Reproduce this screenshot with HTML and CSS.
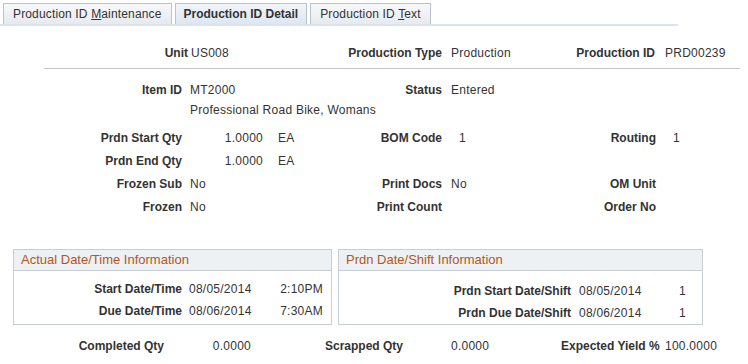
FILE: index.html
```html
<!DOCTYPE html>
<html lang="en">
<head>
  <meta charset="UTF-8" />
  <title>Production ID Detail</title>
  <link rel="stylesheet" href="styles.css">
</head>
<body>
  <div class="tabs">
    <div class="tab">Production ID <u>M</u>aintenance</div>
    <div class="tab active">Production ID Detail</div>
    <div class="tab">Production ID <u>T</u>ext</div>
  </div>

  <div class="header">
    <div class="label">Unit</div>
    <div class="value v-unit">US008</div>
    <div class="label">Production Type</div>
    <div class="value">Production</div>
    <div class="label">Production ID</div>
    <div class="value v-last">PRD00239</div>
  </div>

  <div class="fields">
    <div class="label">Item ID</div>
    <div class="value">
      MT2000
      <div class="desc">Professional Road Bike, Womans</div>
    </div>
    <div class="label">Status</div>
    <div class="value">Entered</div>
    <div></div>
    <div></div>

    <div class="label">Prdn Start Qty</div>
    <div class="value"><span class="qty">1.0000</span><span class="uom">EA</span></div>
    <div class="label">BOM Code</div>
    <div class="value indent">1</div>
    <div class="label">Routing</div>
    <div class="value indent">1</div>

    <div class="label">Prdn End Qty</div>
    <div class="value"><span class="qty">1.0000</span><span class="uom">EA</span></div>
    <div></div>
    <div></div>
    <div></div>
    <div></div>

    <div class="label">Frozen Sub</div>
    <div class="value">No</div>
    <div class="label">Print Docs</div>
    <div class="value">No</div>
    <div class="label">OM Unit</div>
    <div class="value"></div>

    <div class="label">Frozen</div>
    <div class="value">No</div>
    <div class="label">Print Count</div>
    <div class="value"></div>
    <div class="label">Order No</div>
    <div class="value"></div>
  </div>

  <div class="boxes">
    <div class="box box-actual">
      <div class="box-title">Actual Date/Time Information</div>
      <div class="box-body">
        <div class="label">Start Date/Time</div>
        <div class="value">08/05/2014</div>
        <div class="value right">2:10PM</div>
        <div class="label">Due Date/Time</div>
        <div class="value">08/06/2014</div>
        <div class="value right">7:30AM</div>
      </div>
    </div>
    <div class="box box-prdn">
      <div class="box-title">Prdn Date/Shift Information</div>
      <div class="box-body">
        <div class="label">Prdn Start Date/Shift</div>
        <div class="value">08/05/2014</div>
        <div class="value right">1</div>
        <div class="label">Prdn Due Date/Shift</div>
        <div class="value">08/06/2014</div>
        <div class="value right">1</div>
      </div>
    </div>
  </div>

  <div class="totals">
    <div class="label">Completed Qty</div>
    <div class="value right">0.0000</div>
    <div class="label left">Scrapped Qty</div>
    <div class="value">0.0000</div>
    <div class="label">Expected Yield %</div>
    <div class="value">100.0000</div>
  </div>
</body>
</html>
```

FILE: styles.css
```css
html, body {
  margin: 0;
  padding: 0;
  background: #fff;
  font-family: "Liberation Sans", Arial, sans-serif;
  font-size: 12px;
  color: #333;
}

.tabs {
  display: flex;
  gap: 3px;
  width: 678px;
  box-sizing: border-box;
  padding: 3px 0 0 3px;
  border-bottom: 2px solid #dbe4ee;
}

.tab {
  height: 21px;
  line-height: 21px;
  box-sizing: border-box;
  padding: 0 9px;
  border: 1px solid #b9c3ce;
  border-bottom: none;
  background: linear-gradient(#f7f8fa, #e6eaef);
  color: #333;
  letter-spacing: 0.15px;
  white-space: nowrap;
}

.tab.active {
  font-weight: bold;
  letter-spacing: 0;
  padding: 0 8px;
  background: linear-gradient(#f1f5fa, #dde6f1);
}

.label {
  font-weight: bold;
  text-align: right;
  white-space: nowrap;
}

.value {
  letter-spacing: 0.25px;
  white-space: nowrap;
}

.right {
  text-align: right;
}

.header {
  display: grid;
  grid-template-columns: 144px 154px 100px 118px 95px 1fr;
  grid-auto-rows: 16px;
  line-height: 16px;
  width: 696px;
  margin-left: 44px;
  padding: 19px 0 7px;
  border-bottom: 1px solid #c4c4c4;
}

.header .value {
  padding-left: 9px;
}

.header .v-unit {
  padding-left: 3px;
}

.header .v-last {
  padding-left: 10px;
}

.fields {
  display: grid;
  grid-template-columns: 182px 160px 100px 119px 95px 1fr;
  line-height: 16px;
  row-gap: 7px;
  margin-top: 13px;
}

.fields .value {
  padding-left: 9px;
}

.fields .value:nth-child(6n+2) {
  padding-left: 8px;
}

.fields .indent {
  padding-left: 17px;
}

.desc {
  margin-top: 4px;
  padding-bottom: 5px;
}

.qty {
  display: inline-block;
  width: 73px;
  text-align: right;
}

.uom {
  margin-left: 15px;
}

.boxes {
  display: flex;
  gap: 6px;
  margin: 34px 0 0 13px;
}

.box {
  border: 1px solid #c7cdd3;
}

.box-actual {
  width: 319px;
  box-sizing: border-box;
}

.box-prdn {
  width: 365px;
  box-sizing: border-box;
}

.box-title {
  height: 20px;
  line-height: 20px;
  padding-left: 7px;
  font-size: 13px;
  color: #b4561f;
  background: #edf1f3;
  border-bottom: 1px solid #c7cdd3;
}

.box-body {
  display: grid;
  line-height: 16px;
  row-gap: 6px;
  padding: 10px 8px 5px 0;
}

.box-actual .box-body {
  grid-template-columns: 168px auto 1fr;
}

.box-actual .box-body .value:not(.right) {
  padding-left: 7px;
}

.box-prdn .box-body {
  grid-template-columns: 232px auto 1fr;
  padding: 12px 16px 3px 0;
}

.box-prdn .box-body .value:not(.right) {
  padding-left: 8px;
}

.totals {
  display: grid;
  grid-template-columns: 164px 87px 200px 110px 95px 1fr;
  line-height: 16px;
  margin-top: 13px;
}

.totals .left {
  text-align: left;
  padding-left: 74px;
}

.totals .value:last-child {
  padding-left: 9px;
}
```
